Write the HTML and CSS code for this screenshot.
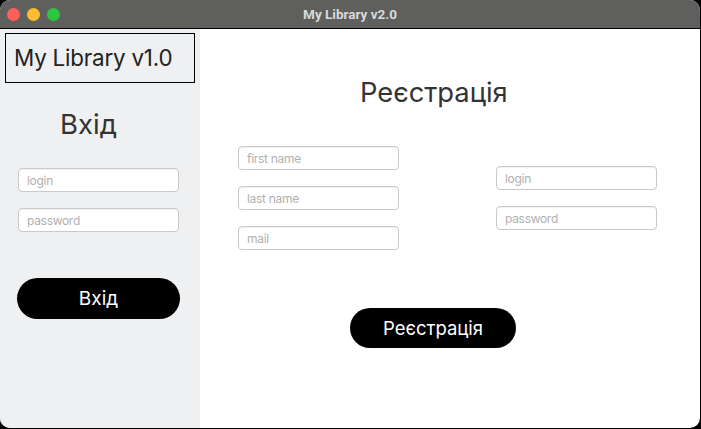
FILE: index.html
```html
<!DOCTYPE html>
<html lang="uk">
<head>
<meta charset="utf-8">
<title>My Library v2.0</title>
<link rel="stylesheet" href="styles.css">
</head>
<body>
<div class="window">
  <div class="titlebar">
    <div class="lights">
      <span class="light red"></span>
      <span class="light yellow"></span>
      <span class="light green"></span>
    </div>
    <div class="title">My Library v2.0</div>
  </div>
  <div class="main">
    <aside class="sidebar">
      <div class="brand">My Library v1.0</div>
      <h2 class="side-heading">Вхід</h2>
      <input class="field side-field" type="text" placeholder="login">
      <input class="field side-field second" type="password" placeholder="password">
      <button class="pill side-btn">Вхід</button>
    </aside>
    <section class="content">
      <h1 class="reg-heading">Реєстрація</h1>
      <div class="reg-form">
        <div class="col col-left">
          <input class="field" type="text" placeholder="first name">
          <input class="field" type="text" placeholder="last name">
          <input class="field" type="text" placeholder="mail">
        </div>
        <div class="col col-right">
          <input class="field" type="text" placeholder="login">
          <input class="field" type="password" placeholder="password">
        </div>
      </div>
      <button class="pill reg-btn">Реєстрація</button>
    </section>
  </div>
</div>
</body>
</html>
```

FILE: styles.css
```css
* { box-sizing: border-box; }
html, body { margin: 0; padding: 0; }
body {
  background: #000;
  width: 701px;
  height: 429px;
  overflow: hidden;
  font-family: Inter, "Noto Sans", "DejaVu Sans", sans-serif;
}
.window {
  width: 700px;
  height: 428px;
  border-radius: 10px;
  overflow: hidden;
  background: #fff;
  display: flex;
  flex-direction: column;
}
.titlebar {
  height: 29px;
  flex: none;
  background: #5f605e;
  border-bottom: 1px solid #000;
  display: flex;
  align-items: center;
  position: relative;
}
.lights {
  display: flex;
  gap: 7px;
  padding-left: 7px;
}
.light {
  width: 13px;
  height: 13px;
  border-radius: 50%;
  display: block;
}
.red { background: #fe5f57; }
.yellow { background: #febc2e; }
.green { background: #28c840; }
.title {
  position: absolute;
  left: 0;
  right: 0;
  top: 0;
  line-height: 28px;
  text-align: center;
  font-family: Roboto, "Noto Sans", sans-serif;
  font-weight: 700;
  font-size: 13.5px;
  color: #d9d9d9;
}
.main {
  flex: 1;
  display: flex;
}
.sidebar {
  width: 200px;
  flex: none;
  background: #eff0f2;
  display: flex;
  flex-direction: column;
  align-items: flex-start;
}
.brand {
  margin: 4px 0 0 5px;
  width: 190px;
  height: 50px;
  border: 1px solid #000;
  font-size: 22.4px;
  line-height: 48px;
  padding-left: 8px;
  color: #222;
  letter-spacing: -0.2px;
}
.side-heading {
  margin: 25px 0 0 60px;
  font-size: 27.5px;
  line-height: 32px;
  font-weight: 400;
  color: #333;
}
.field {
  display: block;
  width: 161px;
  height: 24px;
  border: 1px solid #c9c9c9;
  border-radius: 4px;
  background: #fff;
  box-shadow: inset 0 1px 1px rgba(0,0,0,0.06);
  padding: 0 8px;
  font-family: Inter, "Noto Sans", sans-serif;
  font-size: 12px;
  color: #333;
  outline: none;
}
.field::placeholder { color: #b0b0b0; letter-spacing: -0.3px; }
.side-field { margin: 28px 0 0 18px; }
.side-field.second { margin-top: 16px; }
.pill {
  border: none;
  background: #000;
  color: #fff;
  border-radius: 22px;
  font-family: Inter, "Noto Sans", sans-serif;
  font-size: 19px;
  font-weight: 400;
  padding: 0;
}
.side-btn {
  margin: 46px 0 0 17px;
  width: 163px;
  height: 41px;
}
.content {
  flex: 1;
  display: flex;
  flex-direction: column;
  align-items: flex-start;
}
.reg-heading {
  margin: 48px 0 0 160px;
  font-size: 27.3px;
  line-height: 32px;
  font-weight: 400;
  color: #333;
}
.reg-form {
  display: flex;
  gap: 97px;
  margin: 37px 0 0 38px;
}
.col {
  display: flex;
  flex-direction: column;
  gap: 16px;
}
.col-right { margin-top: 20px; }
.reg-btn {
  margin: 58px 0 0 150px;
  width: 166px;
  height: 40px;
  font-size: 18.5px;
}
```
